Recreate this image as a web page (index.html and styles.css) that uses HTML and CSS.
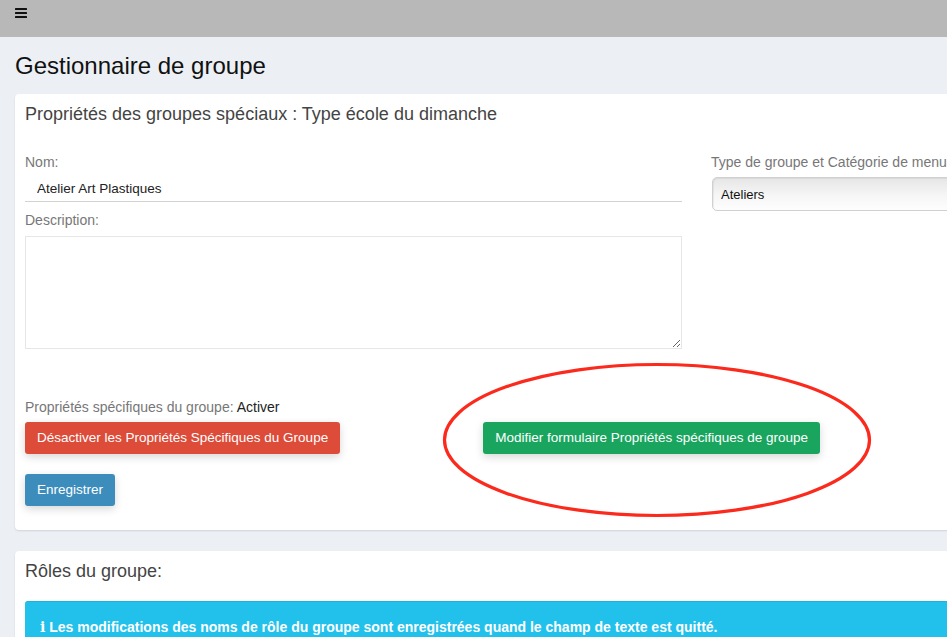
FILE: index.html
```html
<!DOCTYPE html>
<html lang="fr">
<head>
<meta charset="utf-8">
<title>Gestionnaire de groupe</title>
<link rel="stylesheet" href="styles.css">
</head>
<body>
<header class="topbar">
  <span class="burger"><span></span><span></span><span></span></span>
</header>
<main class="content">
  <h1 class="page-title">Gestionnaire de groupe</h1>

  <section class="box">
    <div class="box-header">
      <h3 class="box-title">Propriétés des groupes spéciaux : Type école du dimanche</h3>
    </div>
    <div class="box-body">
      <div class="form-row">
        <div class="col-left">
          <label class="lbl">Nom:</label>
          <input class="line-input" type="text" value="Atelier Art Plastiques">
          <label class="lbl lbl-desc">Description:</label>
          <textarea class="area"></textarea>
        </div>
        <div class="col-right">
          <label class="lbl nowrap">Type de groupe et Catégorie de menu</label>
          <select class="sel"><option>Ateliers</option></select>
        </div>
      </div>

      <p class="lbl props">Propriétés spécifiques du groupe: <span class="dark">Activer</span></p>
      <div class="btn-row">
        <button class="btn btn-danger">Désactiver les Propriétés Spécifiques du Groupe</button>
        <button class="btn btn-success">Modifier formulaire Propriétés spécifiques de groupe</button>
      </div>
      <button class="btn btn-primary save">Enregistrer</button>
    </div>
    <svg class="circle" width="440" height="166" viewBox="0 0 440 166">
      <ellipse cx="220" cy="83" rx="212.5" ry="75.5" fill="none" stroke="#fb2a1c" stroke-width="3.2"/>
    </svg>
  </section>

  <section class="box box2">
    <div class="box-header">
      <h3 class="box-title">Rôles du groupe:</h3>
    </div>
    <div class="box-body body2">
      <div class="alert"><span class="info-i">i</span> Les modifications des noms de rôle du groupe sont enregistrées quand le champ de texte est quitté.</div>
    </div>
  </section>
</main>
</body>
</html>
```

FILE: styles.css
```css
html, body {
  margin: 0;
  padding: 0;
}
body {
  width: 947px;
  height: 637px;
  overflow: hidden;
  background: #ecf0f5;
  font-family: "Liberation Sans", Arial, Helvetica, sans-serif;
  color: #333;
}
.topbar {
  height: 37px;
  background: #b8b8b8;
  display: flex;
  align-items: flex-start;
  padding: 8px 0 0 15px;
  box-sizing: border-box;
}
.burger {
  display: flex;
  flex-direction: column;
  justify-content: space-between;
  width: 12px;
  height: 10px;
}
.burger span {
  display: block;
  height: 2px;
  background: #111;
  border-radius: 0.5px;
}
.content {
  width: 1200px;
  padding: 15px 0 0 15px;
  border-left: 2px solid #e4e2ef;
  margin-left: -2px;
}
.page-title {
  margin: 0 0 14px 0;
  font-size: 24px;
  line-height: 28px;
  font-weight: normal;
  color: #111;
}
.box {
  position: relative;
  background: #fff;
  border-radius: 4px;
  box-shadow: 0 1px 2px rgba(0,0,0,0.12);
  width: 1100px;
}
.box2 {
  margin-top: 21px;
}
.box-header {
  padding: 10px 10px;
}
.box-title {
  margin: 0;
  font-size: 18px;
  line-height: 20px;
  font-weight: normal;
  color: #444;
}
.box-body {
  padding: 18px 10px 24px 10px;
}
.body2 {
  padding-top: 10px;
}
.form-row {
  display: flex;
  gap: 29px;
}
.col-left {
  width: 657px;
  display: flex;
  flex-direction: column;
}
.col-right {
  flex: 1;
  display: flex;
  flex-direction: column;
}
.lbl {
  display: block;
  font-size: 14px;
  line-height: 20px;
  color: #777;
  margin: 0 0 4px 0;
}
.nowrap {
  white-space: nowrap;
}
.line-input {
  box-sizing: border-box;
  height: 26px;
  border: none;
  border-bottom: 1px solid #d2d2d2;
  padding: 0 12px;
  font-family: "Liberation Sans", Arial, sans-serif;
  font-size: 13.5px;
  color: #222;
  background: transparent;
  outline: none;
}
.lbl-desc {
  margin-top: 8px;
  margin-bottom: 6px;
}
.area {
  box-sizing: border-box;
  height: 113px;
  border: 1px solid #e6e6e6;
  border-radius: 0;
  resize: both;
  font-family: "Liberation Sans", Arial, sans-serif;
}
.sel {
  -webkit-appearance: none;
  appearance: none;
  box-sizing: border-box;
  height: 34px;
  margin: 1px 0 0 1px;
  border: 1px solid #d0d0d0;
  border-radius: 5px;
  padding: 0 8px;
  font-family: "Liberation Sans", Arial, sans-serif;
  font-size: 13px;
  color: #111;
  background: linear-gradient(to bottom, #e6e6e6 0%, #f6f6f6 55%, #fdfdfd 100%);
  box-shadow: inset 1px 1px 1px rgba(0,0,0,0.06);
}
.props {
  margin-top: 48px;
  margin-bottom: 5px;
}
.dark {
  color: #222;
}
.btn-row {
  display: flex;
  gap: 143px;
}
.btn {
  border: none;
  border-radius: 3px;
  padding: 6px 12px;
  font-family: "Liberation Sans", Arial, sans-serif;
  font-size: 13.5px;
  line-height: 20px;
  color: #fff;
  box-shadow: 0 3px 9px rgba(0,0,0,0.16);
  cursor: pointer;
}
.btn-danger {
  background: #dd4b39;
}
.btn-success {
  background: #1aa55f;
}
.btn-primary {
  background: #3c8dbc;
}
.save {
  margin-top: 20px;
}
.circle {
  position: absolute;
  left: 422px;
  top: 263px;
  pointer-events: none;
}
.alert {
  background: #21c1ec;
  border-top: 1px solid #1cb2dc;
  border-radius: 3px;
  padding: 15px 15px;
  font-size: 14px;
  line-height: 20px;
  font-weight: bold;
  color: #fff;
}
.info-i {
  font-family: "DejaVu Serif", "Liberation Serif", serif;
  font-weight: bold;
  font-size: 14px;
}
```
